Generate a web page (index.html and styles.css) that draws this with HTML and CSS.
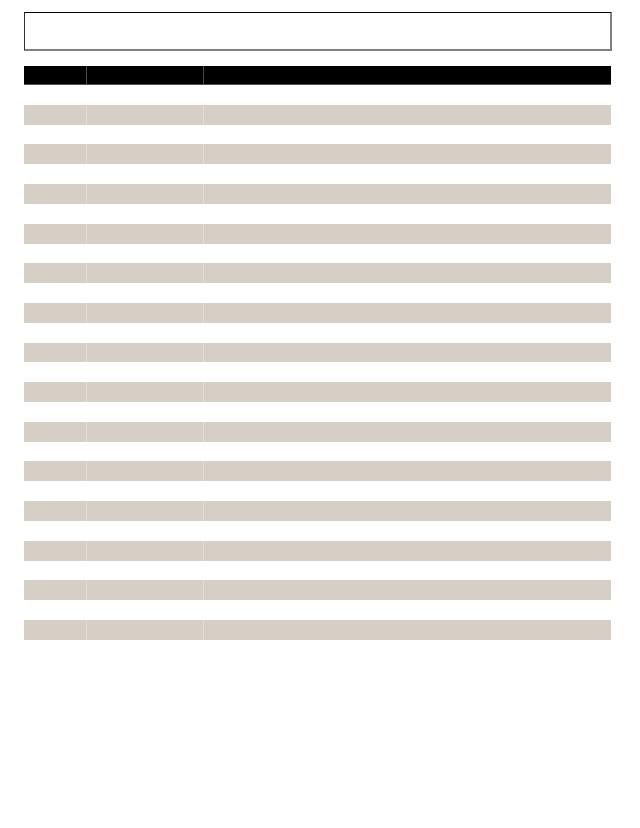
FILE: index.html
```html
<!DOCTYPE html>
<html>
<head>
<meta charset="utf-8">
<link rel="stylesheet" href="styles.css">
</head>
<body>
<div class="page">
  <div class="box"></div>
  <div class="table" id="t">
    <div class="row head"><div class="c c1"></div><div class="c c2"></div><div class="c c3"></div></div>
    <div class="row"><div class="c c1"></div><div class="c c2"></div><div class="c c3"></div></div>
    <div class="row alt"><div class="c c1"></div><div class="c c2"></div><div class="c c3"></div></div>
    <div class="row"><div class="c c1"></div><div class="c c2"></div><div class="c c3"></div></div>
    <div class="row alt"><div class="c c1"></div><div class="c c2"></div><div class="c c3"></div></div>
    <div class="row"><div class="c c1"></div><div class="c c2"></div><div class="c c3"></div></div>
    <div class="row alt"><div class="c c1"></div><div class="c c2"></div><div class="c c3"></div></div>
    <div class="row"><div class="c c1"></div><div class="c c2"></div><div class="c c3"></div></div>
    <div class="row alt"><div class="c c1"></div><div class="c c2"></div><div class="c c3"></div></div>
    <div class="row"><div class="c c1"></div><div class="c c2"></div><div class="c c3"></div></div>
    <div class="row alt"><div class="c c1"></div><div class="c c2"></div><div class="c c3"></div></div>
    <div class="row"><div class="c c1"></div><div class="c c2"></div><div class="c c3"></div></div>
    <div class="row alt"><div class="c c1"></div><div class="c c2"></div><div class="c c3"></div></div>
    <div class="row"><div class="c c1"></div><div class="c c2"></div><div class="c c3"></div></div>
    <div class="row alt"><div class="c c1"></div><div class="c c2"></div><div class="c c3"></div></div>
    <div class="row"><div class="c c1"></div><div class="c c2"></div><div class="c c3"></div></div>
    <div class="row alt"><div class="c c1"></div><div class="c c2"></div><div class="c c3"></div></div>
    <div class="row"><div class="c c1"></div><div class="c c2"></div><div class="c c3"></div></div>
    <div class="row alt"><div class="c c1"></div><div class="c c2"></div><div class="c c3"></div></div>
    <div class="row"><div class="c c1"></div><div class="c c2"></div><div class="c c3"></div></div>
    <div class="row alt"><div class="c c1"></div><div class="c c2"></div><div class="c c3"></div></div>
    <div class="row"><div class="c c1"></div><div class="c c2"></div><div class="c c3"></div></div>
    <div class="row alt"><div class="c c1"></div><div class="c c2"></div><div class="c c3"></div></div>
    <div class="row"><div class="c c1"></div><div class="c c2"></div><div class="c c3"></div></div>
    <div class="row alt"><div class="c c1"></div><div class="c c2"></div><div class="c c3"></div></div>
    <div class="row"><div class="c c1"></div><div class="c c2"></div><div class="c c3"></div></div>
    <div class="row alt"><div class="c c1"></div><div class="c c2"></div><div class="c c3"></div></div>
    <div class="row"><div class="c c1"></div><div class="c c2"></div><div class="c c3"></div></div>
    <div class="row alt"><div class="c c1"></div><div class="c c2"></div><div class="c c3"></div></div>
  </div>
</div>
</body>
</html>
```
FILE: styles.css
```css
html, body {
  margin: 0;
  padding: 0;
  background: #ffffff;
  font-family: "Liberation Sans", Arial, sans-serif;
}
.page {
  padding: 12px 29px 0 24px;
  width: 587px;
}
.box {
  box-sizing: border-box;
  width: 588px;
  height: 39px;
  border-style: solid;
  border-width: 1px 2px 2px 1px;
  border-color: #000000 #808080 #808080 #303030;
  background: #ffffff;
}
.table {
  margin-top: 15px;
  width: 587px;
  display: flex;
  flex-direction: column;
}
.row {
  display: grid;
  grid-template-columns: 62px 117px 408px;
  height: 19.82px;
}
.row.head {
  height: 19px;
  background: #000000;
  box-sizing: border-box;
  border-bottom: 1px solid #555555;
}
.row.alt {
  background: #d6cfc6;
}
.c {
  box-sizing: border-box;
}
.c2, .c3 {
  border-left: 1px solid transparent;
}
.head .c2, .head .c3 {
  border-left-color: #4a4a4a;
}
.alt .c2, .alt .c3 {
  border-left-color: #e2ddd6;
}
```
